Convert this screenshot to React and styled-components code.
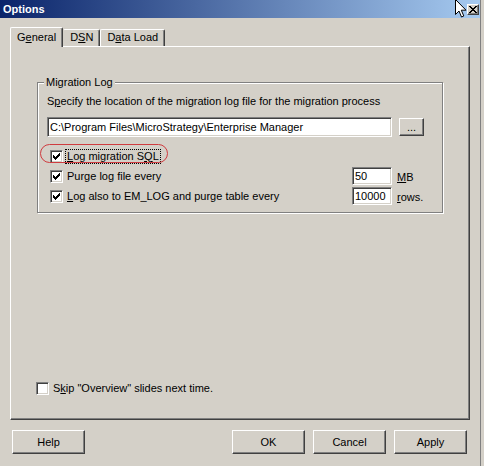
import React from 'react';
import styled, { createGlobalStyle, css } from 'styled-components';

const GlobalStyle = createGlobalStyle`
  html, body {
    margin: 0;
    padding: 0;
    background: #d4d0c8;
  }
  body {
    font-family: "Liberation Sans", Arial, sans-serif;
    font-size: 11px;
    color: #000;
  }
`;

const sunken = css`
  box-sizing: border-box;
  border: 1px solid;
  border-color: #808080 #fff #fff #808080;
  box-shadow: inset 1px 1px 0 #404040, inset -1px -1px 0 #d4d0c8;
  background: #fff;
`;

const raised = css`
  box-sizing: border-box;
  border: 1px solid;
  border-color: #fff #404040 #404040 #fff;
  box-shadow: inset -1px -1px 0 #808080;
  background: #d4d0c8;
`;

const Window = styled.div`
  position: relative;
  box-sizing: border-box;
  width: 481px;
  height: 466px;
  display: flex;
  flex-direction: column;
  background: #d4d0c8;
  border-right: 1px solid #808080;
  overflow: hidden;
`;

const TitleBar = styled.div`
  flex: none;
  height: 18px;
  display: flex;
  align-items: center;
  justify-content: space-between;
  padding: 0 1px 0 3px;
  background: linear-gradient(to right, #0a246a, #a6caf0);
  color: #fff;
  font-weight: bold;
`;

const CloseBox = styled.div`
  ${raised};
  width: 12px;
  height: 11px;
  display: flex;
  align-items: center;
  justify-content: center;
`;

const Body = styled.div`
  flex: 1;
  display: flex;
  flex-direction: column;
  padding: 9px 10px 0 10px;
  min-height: 0;
`;

const TabStrip = styled.div`
  position: relative;
  z-index: 1;
  height: 19px;
  display: flex;
  align-items: flex-end;
`;

const Tab = styled.div`
  box-sizing: border-box;
  height: ${(p) => (p.$active ? '20px' : '17px')};
  margin-bottom: ${(p) => (p.$active ? '-1px' : '0')};
  padding: ${(p) => (p.$active ? '3px 6px 0' : '1px 6px 0')};
  line-height: 13px;
  background: #d4d0c8;
  border-top: 1px solid #fff;
  border-left: 1px solid ${(p) => (p.$hideLeft ? '#d4d0c8' : '#fff')};
  border-right: 1px solid #404040;
  box-shadow: inset -1px 0 0 #808080;
  border-radius: 2px 2px 0 0;
`;

const Panel = styled.div`
  ${raised};
  flex: 1;
  display: flex;
  flex-direction: column;
`;

const Group = styled.div`
  position: relative;
  margin: 35px 26px 0;
  padding: 12px 18px 7px 9px;
  border: 1px solid #808080;
  box-shadow: inset 1px 1px 0 #fff, 1px 1px 0 #fff;
`;

const Legend = styled.span`
  position: absolute;
  top: -7px;
  left: 6px;
  padding: 0 2px;
  line-height: 13px;
  background: #d4d0c8;
`;

const Description = styled.div`
  line-height: 13px;
`;

const PathRow = styled.div`
  display: flex;
  align-items: center;
  gap: 7px;
  margin-top: 9px;
`;

const TextBox = styled.input`
  ${sunken};
  height: 20px;
  flex: ${(p) => (p.$grow ? 1 : 'none')};
  min-width: 0;
  margin: 0;
  padding: 0 2px;
  font: inherit;
  color: #000;
  outline: none;
`;

const SmallButton = styled.div`
  ${raised};
  width: 25px;
  height: 18px;
  display: flex;
  align-items: center;
  justify-content: center;
  line-height: 11px;
`;

const OptionGrid = styled.div`
  display: grid;
  grid-template-columns: 1fr 40px 32px;
  grid-auto-rows: 18px;
  row-gap: 2px;
  margin-top: 10px;
`;

const CheckRow = styled.div`
  position: relative;
  display: flex;
  align-items: center;
  padding-left: ${(p) => p.$indent || 0}px;
  grid-column: ${(p) => (p.$wide ? '1 / -1' : 'auto')};
`;

const Box = styled.span`
  ${sunken};
  flex: none;
  width: 13px;
  height: 13px;
  display: flex;
  align-items: center;
  justify-content: center;
`;

const Label = styled.span`
  margin-left: 3px;
  padding: 0 1px;
  line-height: 13px;
  outline: ${(p) => (p.$focused ? '1px dotted #000' : 'none')};
`;

const Highlight = styled.span`
  position: absolute;
  left: -7px;
  top: -3px;
  width: 128px;
  height: 19px;
  box-sizing: border-box;
  border: 1px solid #cf3b3f;
  border-radius: 10px;
  pointer-events: none;
`;

const NumberBox = styled(TextBox)`
  height: 18px;
  align-self: center;
`;

const Unit = styled.span`
  padding: 3px 0 0 5px;
  line-height: 13px;
  align-self: center;
`;

const SkipRow = styled(CheckRow)`
  margin-top: auto;
  margin-bottom: 24px;
  height: 13px;
`;

const ButtonRow = styled.div`
  flex: none;
  display: flex;
  gap: 8px;
  padding: 10px 13px 12px 12px;
`;

const Button = styled.div`
  ${raised};
  width: 73px;
  height: 24px;
  display: flex;
  align-items: center;
  justify-content: center;
  margin-right: ${(p) => (p.$pushRight ? 'auto' : '0')};
`;

const Key = styled.span`
  text-decoration: underline;
`;

const Pointer = styled.svg`
  position: absolute;
  left: 455px;
  top: -1px;
  pointer-events: none;
`;

const CheckMark = () => (
  <svg width="7" height="7" viewBox="0 0 7 7" shapeRendering="crispEdges">
    {[2, 3, 4, 3, 2, 1, 0].map((y, x) => (
      <rect key={x} x={x} y={y} width="1" height="3" fill="#000" />
    ))}
  </svg>
);

const CheckBox = ({ checked }) => <Box>{checked && <CheckMark />}</Box>;

const App = () => {
  return (
    <>
      <GlobalStyle />
      <Window>
        <TitleBar>
          <span>Options</span>
          <CloseBox>
            <svg width="8" height="7" viewBox="0 0 8 7" shapeRendering="crispEdges">
              <path d="M0 0h2v1h1v1h2V1h1V0h2v1H7v1H6v1H5v1h1v1h1v1h1v1H6V6H5V5H3v1H2v1H0V6h1V5h1V4h1V3H2V2H1V1H0z" fill="#000" />
            </svg>
          </CloseBox>
        </TitleBar>

        <Body>
          <TabStrip>
            <Tab $active>G<Key>e</Key>neral</Tab>
            <Tab $hideLeft>D<Key>S</Key>N</Tab>
            <Tab>D<Key>a</Key>ta Load</Tab>
          </TabStrip>

          <Panel>
            <Group>
              <Legend>Migration Log</Legend>
              <Description>
                S<Key>p</Key>ecify the location of the migration log file for the migration process
              </Description>
              <PathRow>
                <TextBox $grow readOnly value="C:\Program Files\MicroStrategy\Enterprise Manager" />
                <SmallButton>...</SmallButton>
              </PathRow>

              <OptionGrid>
                <CheckRow $wide $indent={3}>
                  <Highlight />
                  <CheckBox checked />
                  <Label $focused><Key>L</Key>og migration S<Key>Q</Key>L</Label>
                </CheckRow>

                <CheckRow $indent={3}>
                  <CheckBox checked />
                  <Label>Purge log file every</Label>
                </CheckRow>
                <NumberBox readOnly value="50" />
                <Unit><Key>M</Key>B</Unit>

                <CheckRow $indent={3}>
                  <CheckBox checked />
                  <Label><Key>L</Key>og also to EM_LOG and purge table every</Label>
                </CheckRow>
                <NumberBox readOnly value="10000" />
                <Unit><Key>r</Key>ows.</Unit>
              </OptionGrid>
            </Group>

            <SkipRow $indent={25}>
              <CheckBox />
              <Label>S<Key>k</Key>ip "Overview" slides next time.</Label>
            </SkipRow>
          </Panel>
        </Body>

        <ButtonRow>
          <Button $pushRight>Help</Button>
          <Button>OK</Button>
          <Button>Cancel</Button>
          <Button>Apply</Button>
        </ButtonRow>

        <Pointer width="13" height="19" viewBox="0 0 13 19">
          <path d="M0.5 0.5 L0.5 15.5 L4 12 L6.5 18 L8.8 17 L6.3 11.2 L11 11.2 Z" fill="#fff" stroke="#000" strokeWidth="1" />
        </Pointer>
      </Window>
    </>
  );
};

export default App;
